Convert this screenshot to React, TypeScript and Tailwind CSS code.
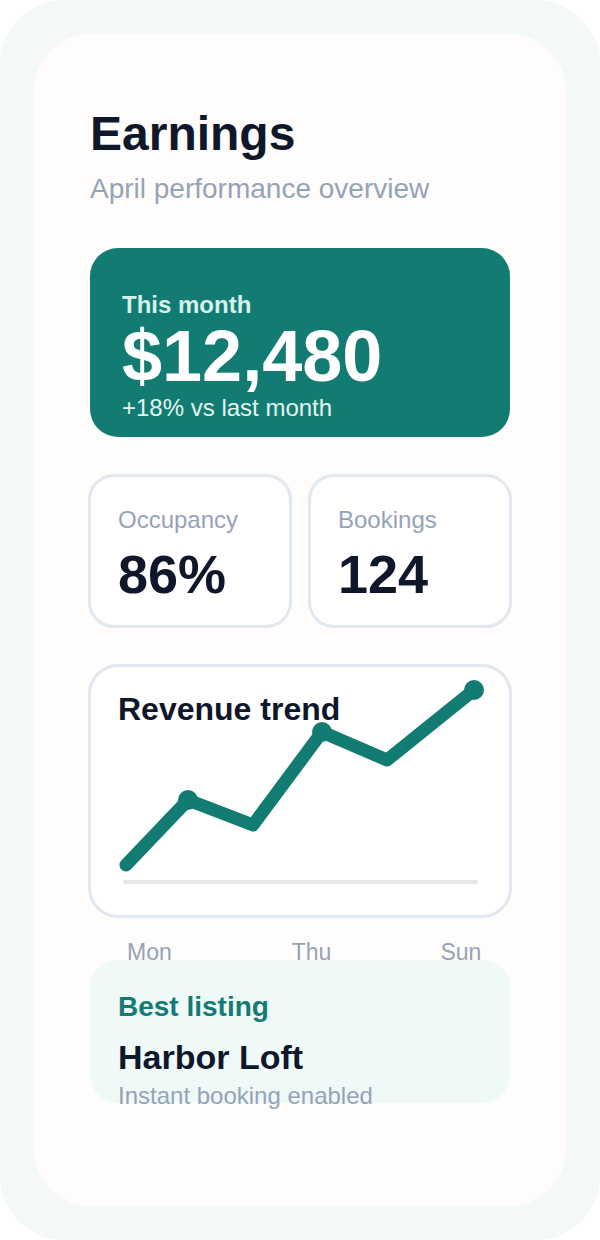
import React from 'react';

const points = [
  [36, 199],
  [98, 134],
  [163, 159],
  [232, 66],
  [297, 94],
  [384, 24],
];

function TrendChart() {
  const line = points.map(([x, y]) => `${x},${y}`).join(' ');
  return (
    <svg className="absolute inset-0" width="420" height="250" viewBox="0 0 420 250">
      <line x1="35" y1="216" x2="386" y2="216" stroke="#e5e7eb" strokeWidth="4" strokeLinecap="round" />
      <polyline
        points={line}
        fill="none"
        stroke="#137c72"
        strokeWidth="13"
        strokeLinecap="round"
        strokeLinejoin="round"
      />
      {[points[1], points[3], points[5]].map(([x, y], i) => (
        <circle key={i} cx={x} cy={y} r="10" fill="#137c72" />
      ))}
    </svg>
  );
}

function StatCard({ label, value }: { label: string; value: string }) {
  return (
    <div className="h-[150px] flex-1 rounded-[24px] bg-white pl-[28px] pt-[30px] outline-[3px] outline-offset-[-1.5px] outline-[#e2e8f0]">
      <p className="text-[24px] leading-[28px] text-[#94a3b8]">{label}</p>
      <p className="mt-[13px] text-[54px] font-bold leading-none text-[#0f172a]">{value}</p>
    </div>
  );
}

export default function App() {
  return (
    <div className="w-[600px] bg-white font-['Liberation_Sans',Arial,sans-serif]">
      <div className="h-[1240px] rounded-[64px] bg-[#f4f8f9] p-[34px]">
        <div className="h-full rounded-[56px] bg-[#fffdfb] px-[56px] pt-[71px]">
          <h1 className="text-[48px] font-bold leading-[58px] text-[#0f172a]">Earnings</h1>
          <p className="mt-[9px] text-[28px] leading-[34px] text-[#94a3b8]">April performance overview</p>

          <div className="mt-[42px] h-[189px] rounded-[28px] bg-[#137c72] pl-[32px] pt-[43px]">
            <p className="text-[24px] font-bold leading-[28px] text-[#d6f1eb]">This month</p>
            <p className="mt-[1px] text-[72px] font-bold leading-[72px] text-white">$12,480</p>
            <p className="mt-[2px] text-[24px] leading-[28px] text-[#e3f4f1]">+18% vs last month</p>
          </div>

          <div className="mt-[39px] flex gap-[20px]">
            <StatCard label="Occupancy" value="86%" />
            <StatCard label="Bookings" value="124" />
          </div>

          <div className="relative mt-[40px] h-[250px] rounded-[28px] bg-white pl-[28px] pt-[24px] outline-[3px] outline-offset-[-1.5px] outline-[#e2e8f0]">
            <h2 className="relative text-[32px] font-bold leading-[38px] text-[#0f172a]">Revenue trend</h2>
            <TrendChart />
          </div>

          <div className="mt-[23px] flex h-[21px] pl-[37px] text-[23px] leading-[27px] text-[#94a3b8]">
            <span>Mon</span>
            <span className="ml-[120px]">Thu</span>
            <span className="ml-[109px]">Sun</span>
          </div>

          <div className="relative h-[143px] rounded-[28px] bg-[#eff9f8] pl-[28px] pt-[30px]">
            <p className="text-[28px] font-bold leading-[34px] text-[#137c72]">Best listing</p>
            <p className="mt-[13px] text-[34px] font-bold leading-[40px] text-[#0f172a]">Harbor Loft</p>
            <p className="mt-[5px] text-[24px] leading-[28px] text-[#94a3b8]">Instant booking enabled</p>
          </div>
        </div>
      </div>
    </div>
  );
}
